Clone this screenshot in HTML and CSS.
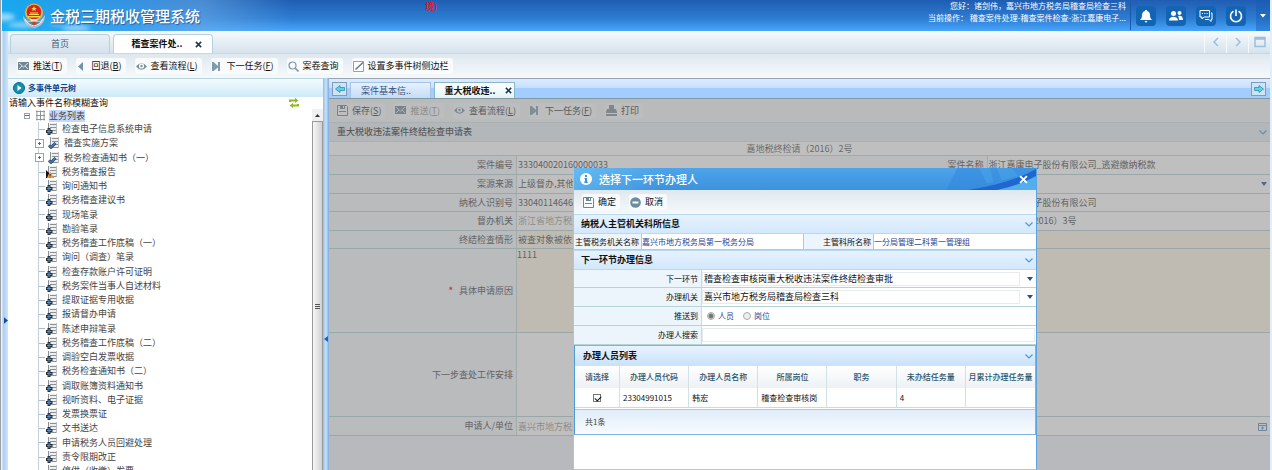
FILE: index.html
```html
<!DOCTYPE html>
<html lang="zh-CN">
<head>
<meta charset="utf-8">
<title>金税三期税收管理系统</title>
<link rel="stylesheet" href="styles.css">
</head>
<body>
<svg class="defs" aria-hidden="true">
  <symbol id="mail" viewBox="0 0 11 11"><path fill="#6f8796" d="M0 1h11v8H0z"/><path d="M1 2l4.500 4L10 2M1 8l3-3M10 8L7 5" fill="none" stroke="#e8eef2" stroke-width=".9"/></symbol>
  <symbol id="back" viewBox="0 0 11 11"><path fill="#6f93a8" d="M6 1v9L1 5.500z"/></symbol>
  <symbol id="eye" viewBox="0 0 11 11"><path fill="#7890a0" d="M0 5.500Q5.500-1 11 5.500Q5.500 12 0 5.500z"/><circle cx="5.500" cy="5" r="2.600" fill="#fff"/><circle cx="5.500" cy="5" r="1.200" fill="#7890a0"/></symbol>
  <symbol id="next" viewBox="0 0 11 11"><path fill="#7f9aab" d="M0 1h1.500L6 5V1h2v9H6V6.500L1.500 10H0z"/></symbol>
  <symbol id="search" viewBox="0 0 11 11"><circle cx="4.500" cy="4.500" r="3.500" fill="none" stroke="#7f97a6" stroke-width="1.200"/><path d="M7 7l3.500 3.500" stroke="#7f97a6" stroke-width="1.600"/></symbol>
  <symbol id="edit" viewBox="0 0 11 11"><path fill="#fff" stroke="#8ea2af" d="M.5.500h10v10H.5z"/><path d="M2.500 8.500L10 1.500" stroke="#647d8d" stroke-width="1.600"/></symbol>
  <symbol id="save" viewBox="0 0 11 11"><path fill="#fff" stroke="#6c8594" d="M.5.500h9l1 1v9H.5z"/><path fill="#6c8594" d="M3 0h5v4H3zM2 6h7v1H2z"/><path fill="#fff" d="M6 1h1v2H6z"/></symbol>
  <symbol id="print" viewBox="0 0 11 11"><path fill="#7f8f99" d="M3 0h5v4H3zM1 4h9l1 3v1H0V7zM0 9h11v2H0z"/></symbol>
  <symbol id="minus" viewBox="0 0 11 11"><circle cx="5.500" cy="5.500" r="5.300" fill="#6c8ba0"/><path fill="#fff" d="M2.500 4.500h6v2h-6z"/></symbol>
  <symbol id="chev" viewBox="0 0 8 5"><path d="M.5.500L4 4L7.500.500" fill="none" stroke="#4a9ad8" stroke-width="1.200"/></symbol>
  <symbol id="caret" viewBox="0 0 6 4"><path fill="#28508f" d="M0 0h6L3 4z"/></symbol>
  <symbol id="cross" viewBox="0 0 8 8"><path d="M1 1l6 6M7 1L1 7" fill="none" stroke="currentColor" stroke-width="1.800"/></symbol>
  <symbol id="arrow" viewBox="0 0 10 8"><path fill="#55d8e4" stroke="#2f8eb0" stroke-width=".8" d="M.5 2.500h4.500V.500L9.500 4L5 7.500v-2H.5z"/></symbol>
  <symbol id="page" viewBox="0 0 12 12"><path fill="#eceef0" d="M2 0h9v11H2z"/><path d="M2.500 0v11M4 1.500h7M4 4.500h7M4 7.500h7M4 10.500h7" stroke="#8c9196" fill="none"/><path d="M10.500 0v11" stroke="#b8bcc0"/></symbol>
  <symbol id="doc" viewBox="0 0 12 12"><use href="#page" width="12" height="12"/><path fill="#25303c" d="M1.500 5h3v2h2v3h-2v2h-3v-2H0V7h1.500z"/><path fill="#5b93c9" d="M2.500 6h1v2h2v1h-2v2h-1V9H1V8h1.500z"/></symbol>
  <symbol id="done" viewBox="0 0 12 12"><use href="#page" width="12" height="12"/><path d="M.8 8.500L3 10.500L7.500 6" fill="none" stroke="#1e3f5e" stroke-width="2.600"/><path d="M1 8.500L3 10.300L7.300 6" fill="none" stroke="#4a83b5" stroke-width="1.200"/></symbol>
  <symbol id="warn" viewBox="0 0 12 12"><use href="#page" width="12" height="12"/><path fill="#111" d="M0 4l8 8H0z"/><path fill="#f29a37" d="M4 5.500L8 12H.8z"/><path fill="#333" d="M3.600 8h1v2h-1zM3.600 10.500h1v1h-1z"/></symbol>
</svg>

<div class="app">
  <aside class="edge"><svg viewBox="0 0 5 8"><path fill="#0c4fa5" d="M0 0l5 4l-5 4z"/></svg></aside>
  <div class="shell">
    <header class="top">
      <svg class="clouds" viewBox="0 0 270 31" aria-hidden="true">
        <defs><filter id="soft"><feGaussianBlur stdDeviation="2"/></filter></defs>
        <g fill="#fff" filter="url(#soft)"><ellipse cx="2" cy="17" rx="11" ry="4" opacity=".55"/><ellipse cx="20" cy="25" rx="14" ry="3" opacity=".45"/><ellipse cx="74" cy="28" rx="14" ry="3" opacity=".5"/><ellipse cx="55" cy="24" rx="7" ry="2" opacity=".3"/></g>
      </svg>
      <svg class="emblem" viewBox="0 0 24 26" aria-hidden="true">
        <path fill="#b9c3cf" d="M1 12c0 7 4 12 11 13c7-1 11-6 11-13c-2 3-4 5-5 6H6c-2-1-4-3-5-6z"/>
        <path fill="#6f7f92" d="M6 19h12l-2 3l-4 2l-4-2z"/>
        <circle cx="12" cy="9.500" r="9" fill="#e8b341"/><circle cx="12" cy="9" r="7.300" fill="#d8231f"/>
        <path fill="#ffd84f" d="M12 3l.8 2h2l-1.600 1.200l.6 2L12 7l-1.800 1.200l.6-2L9.200 5h2zM7 11h10v1H7zM8 9.500h8v1H8zM6 13h12v1.500H6z"/>
        <path fill="#f4e9c5" d="M8 16h8l-1 2H9z"/><circle cx="12" cy="20.500" r="1.800" fill="#cf3a32"/>
        <path d="M3 16c2 4 5 6 9 7c4-1 7-3 9-7" fill="none" stroke="#edf2f6"/>
      </svg>
      <h1>金税三期税收管理系统</h1>
      <span class="env">境)</span>
      <div class="who"><p>您好：诸剑伟，嘉兴市地方税务局稽查局检查三科</p><p>当前操作： 稽查案件处理-稽查案件检查-浙江嘉康电子...</p></div>
      <nav class="tools">
        <button aria-label="通知"><svg viewBox="0 0 14 14"><path fill="#fff" d="M6 1h2v1c2 .6 3 2 3 4.500c0 2 .7 3 2 4.500H1c1.300-1.500 2-2.500 2-4.500C3 4 4 2.600 6 2zM5.500 12h3l-1 1.500h-1z"/></svg></button>
        <button aria-label="用户"><svg viewBox="0 0 14 14"><g fill="#fff"><circle cx="4.500" cy="4.500" r="2.500"/><path d="M0 11.500c0-5 9-5 9 0z"/><circle cx="10.500" cy="4" r="2"/><path d="M9 7c3-1 5 .5 5 4h-4c0-2-.3-3-1-4z"/></g></svg></button>
        <button aria-label="消息"><svg viewBox="0 0 14 14"><g fill="none" stroke="#fff"><path d="M1 1.500h9.500v6.500H5L3 10V8H1z"/><path d="M12 4h1v6.500h-1v2l-2-2H6"/></g><path fill="#fff" d="M3 4h1v1H3zM5.300 4h1v1h-1zM7.600 4h1v1h-1z"/></svg></button>
        <button aria-label="退出"><svg viewBox="0 0 14 14"><path d="M4.500 2.300a5.500 5.500 0 1 0 5 0M7 .5V7" fill="none" stroke="#fff" stroke-width="1.600"/></svg></button>
      </nav>
      <button class="more" aria-label="更多"><svg viewBox="0 0 6 4"><path fill="#fff" d="M0 0h6L3 3.500z"/></svg></button>
    </header>

    <div class="tabs">
      <button class="tab">首页</button>
      <button class="tab on"><span>稽查案件处..</span><svg class="x"><use href="#cross"/></svg></button>
      <div class="pager">
        <button aria-label="向左"><svg viewBox="0 0 12 12"><path d="M8 2L4 6l4 4"/></svg></button>
        <button aria-label="向右"><svg viewBox="0 0 12 12"><path d="M4 2l4 4l-4 4"/></svg></button>
        <button aria-label="窗口"><svg viewBox="0 0 12 12"><path d="M1 1.500h10v9H1zM1 3h10"/></svg></button>
      </div>
    </div>

    <div class="bar">
      <button><svg><use href="#mail"/></svg><span>推送(<u>T</u>)</span></button>
      <button><svg><use href="#back"/></svg><span>回退(<u>B</u>)</span></button>
      <button><svg><use href="#eye"/></svg><span>查看流程(<u>L</u>)</span></button>
      <button><svg><use href="#next"/></svg><span>下一任务(<u>F</u>)</span></button>
      <button><svg><use href="#search"/></svg><span>案卷查询</span></button>
      <button><svg><use href="#edit"/></svg><span>设置多事件树侧边栏</span></button>
    </div>

    <div class="body">
      <section class="side">
        <h2><svg viewBox="0 0 12 12"><circle cx="6" cy="6" r="5.500" fill="#1590ac" stroke="#086a8c"/><path fill="#fff" d="M4.500 3l4 3l-4 3z"/></svg>多事件单元树</h2>
        <div class="find">
          <input type="text" aria-label="事件名称" placeholder="请输入事件名称模糊查询">
          <button aria-label="刷新"><svg viewBox="0 0 10 10"><path fill="#8dbb1a" d="M0 4V1.500h6V0l3.500 2.500L6 5V3.500H2V4zM10 6v2.500H4V10L.5 7.500L4 5v1.500h4V6z"/></svg></button>
        </div>
        <div class="treebox">
          <div class="tree">
            <div class="root"><span class="pm"></span><svg viewBox="0 0 10 12"><path d="M1 .5v11M5 .5v11M9 .5v11M0 1.500h10M0 6h10M0 10.500h10" fill="none" stroke="#858b90"/></svg><span>业务列表</span></div>
            <ul>
              <li><svg><use href="#doc"/></svg>检查电子信息系统申请</li>
              <li class="sub"><svg><use href="#done"/></svg>稽查实施方案</li>
              <li class="sub"><svg><use href="#done"/></svg>税务检查通知书（一）</li>
              <li><svg><use href="#warn"/></svg>税务稽查报告</li>
              <li><svg><use href="#doc"/></svg>询问通知书</li>
              <li><svg><use href="#doc"/></svg>税务稽查建议书</li>
              <li><svg><use href="#doc"/></svg>现场笔录</li>
              <li><svg><use href="#doc"/></svg>勘验笔录</li>
              <li><svg><use href="#doc"/></svg>税务稽查工作底稿（一）</li>
              <li><svg><use href="#doc"/></svg>询问（调查）笔录</li>
              <li><svg><use href="#doc"/></svg>检查存款账户许可证明</li>
              <li><svg><use href="#doc"/></svg>税务案件当事人自述材料</li>
              <li><svg><use href="#doc"/></svg>提取证据专用收据</li>
              <li><svg><use href="#doc"/></svg>报请督办申请</li>
              <li><svg><use href="#doc"/></svg>陈述申辩笔录</li>
              <li><svg><use href="#doc"/></svg>税务稽查工作底稿（二）</li>
              <li><svg><use href="#doc"/></svg>调验空白发票收据</li>
              <li><svg><use href="#doc"/></svg>税务检查通知书（二）</li>
              <li><svg><use href="#doc"/></svg>调取账簿资料通知书</li>
              <li><svg><use href="#doc"/></svg>视听资料、电子证据</li>
              <li><svg><use href="#doc"/></svg>发票换票证</li>
              <li><svg><use href="#doc"/></svg>文书送达</li>
              <li><svg><use href="#doc"/></svg>申请税务人员回避处理</li>
              <li><svg><use href="#doc"/></svg>责令限期改正</li>
              <li><svg><use href="#doc"/></svg>停供（收缴）发票</li>
            </ul>
          </div>
          <div class="scroll"><div class="up"><svg viewBox="0 0 5 3"><path fill="#333" d="M0 3L2.500 0L5 3z"/></svg></div><div class="thumb"><svg viewBox="0 0 5 6"><path d="M0 .5h5M0 2.500h5M0 4.500h5" stroke="#555"/></svg></div></div>
        </div>
      </section>
      <div class="split"><svg viewBox="0 0 4 6"><path fill="#1a5fc4" d="M4 0v6L0 3z"/></svg></div>

      <main class="main">
        <div class="minitabs">
          <button class="go left" aria-label="向左"><svg><use href="#arrow"/></svg></button>
          <button class="mini">案件基本信..</button>
          <button class="mini on"><span>重大税收违..</span><svg class="x"><use href="#cross"/></svg></button>
          <button class="go last" aria-label="向右"><svg><use href="#arrow"/></svg></button>
        </div>
        <div class="work">
          <div class="bar">
            <button><svg><use href="#save"/></svg><span>保存(<u>S</u>)</span></button>
            <button class="off" disabled><svg><use href="#mail"/></svg><span>推送(<u>T</u>)</span></button>
            <button><svg><use href="#eye"/></svg><span>查看流程(<u>L</u>)</span></button>
            <button><svg><use href="#next"/></svg><span>下一任务(<u>F</u>)</span></button>
            <button><svg><use href="#print"/></svg><span>打印</span></button>
          </div>
          <h3 class="formhead">重大税收违法案件终结检查申请表<svg class="chev"><use href="#chev"/></svg></h3>
          <p class="docno">嘉地税终检请（2016）2号</p>
          <form class="grid">
            <label for="f1">案件编号</label><input id="f1" value="333040020160000033">
            <label for="f2">案件名称</label><input id="f2" value="浙江嘉康电子股份有限公司_逃避缴纳税款">
            <label for="f3">案源来源</label><div class="pick wide"><select id="f3"><option>上级督办,其他</option></select><svg><use href="#caret"/></svg></div>
            <label for="f4">纳税人识别号</label><input id="f4" value="330401146462">
            <label for="f5">纳税人名称</label><input id="f5" value="浙江嘉康电子股份有限公司">
            <label for="f6">督办机关</label><input id="f6" class="dim" value="浙江省地方税务局">
            <label for="f7">督办文号</label><input id="f7" value="嘉地税稽（2016）3号">
            <label for="f8">终结检查情形</label><input id="f8" class="wide warm" value="被查对象被依法">
            <label for="f9"><b>*</b>具体申请原因</label><textarea id="f9" class="wide warm">1111</textarea>
            <label for="f10">下一步查处工作安排</label><textarea id="f10" class="wide"></textarea>
            <label for="f11">申请人/单位</label><div class="pick wide"><input id="f11" class="dim" value="嘉兴市地方税务局"><svg class="cal" viewBox="0 0 9 9"><path fill="#fff" stroke="#5d8fc0" d="M.5 1.500h8v7h-8zM.5 3.500h8"/><path d="M4.500 4.500v3M3 6h3" stroke="#5d8fc0"/></svg></div>
          </form>
        </div>
        <div class="mask"></div>

        <div class="dialog" role="dialog" aria-labelledby="dt">
          <div class="dhead">
            <svg class="wave" viewBox="0 0 110 23" preserveAspectRatio="none" aria-hidden="true"><path fill="#2f86dc" d="M14 0h96v23H0z" opacity=".5"/><path fill="#52aeec" d="M62 23Q90 18 110 9v14z"/><path fill="#1f66d0" d="M26 23Q80 16 110 1v7Q90 18 62 23z"/><path fill="#4aa6ea" d="M40 0h14l4 15l-8 1zM62 0h18l8 8l-20 5z" opacity=".5"/></svg>
            <svg class="info" viewBox="0 0 12 12"><circle cx="6" cy="6" r="6" fill="#fff"/><path fill="#3b95dd" d="M5 2h2v2H5zM4.500 5H7v3.500h.7V10H4.300V8.500H5V6h-.5z"/></svg>
            <h2 id="dt">选择下一环节办理人</h2>
            <button aria-label="关闭"><svg><use href="#cross"/></svg></button>
          </div>
          <div class="bar">
            <button><svg><use href="#save"/></svg><span>确定</span></button>
            <button><svg><use href="#minus"/></svg><span>取消</span></button>
          </div>
          <h3 class="sec">纳税人主管机关科所信息<svg class="chev"><use href="#chev"/></svg></h3>
          <dl class="facts"><dt>主管税务机关名称</dt><dd>嘉兴市地方税务局第一税务分局</dd><dt>主管科所名称</dt><dd>一分局管理二科第一管理组</dd></dl>
          <h3 class="sec">下一环节办理信息<svg class="chev"><use href="#chev"/></svg></h3>
          <form class="dform">
            <label for="d1">下一环节</label><div class="pick"><select id="d1"><option>稽查检查审核岗重大税收违法案件终结检查审批</option></select><svg><use href="#caret"/></svg></div>
            <label for="d2">办理机关</label><div class="pick"><select id="d2"><option>嘉兴市地方税务局稽查局检查三科</option></select><svg><use href="#caret"/></svg></div>
            <span class="lab">推送到</span><div class="radios"><label><input type="radio" name="to" checked>人员</label><label><input type="radio" name="to">岗位</label></div>
            <label for="d3">办理人搜索</label><div class="pick"><input type="text" id="d3"></div>
          </form>
          <div class="list">
            <h3>办理人员列表<svg class="chev"><use href="#chev"/></svg></h3>
            <table>
              <thead><tr><th class="c1">请选择</th><th>办理人员代码</th><th>办理人员名称</th><th>所属岗位</th><th>职务</th><th>未办结任务量</th><th>月累计办理任务量</th></tr></thead>
              <tbody><tr><td class="c1"><input type="checkbox" aria-label="选择韩宏" checked></td><td>23304991015</td><td>韩宏</td><td>稽查检查审核岗</td><td></td><td>4</td><td></td></tr></tbody>
            </table>
            <p>共1条</p>
          </div>
        </div>
      </main>
    </div>
  </div>
</div>
</body>
</html>
```

FILE: styles.css
```css
* { box-sizing: border-box; margin: 0; padding: 0; }
body {
  font: 9px/12px "Noto Sans CJK SC", "Liberation Sans", sans-serif;
  color: #111;
  background: #fff;
  overflow: hidden;
}
button, input, select, textarea { font: inherit; color: inherit; border: 0; background: none; border-radius: 0; outline: 0; }
button { display: flex; align-items: center; justify-content: center; white-space: nowrap; }
select, input { appearance: none; min-width: 0; }
svg { flex: none; display: block; }
h1, h2, h3 { white-space: nowrap; }
.defs { position: absolute; width: 0; height: 0; }

.app { display: flex; height: 100vh; border-right: 2px solid #e3eefb; }
.edge {
  width: 8px; flex: none; padding-left: 3px;
  display: flex; align-items: center;
  border-left: 1px solid #9aa0a6;
  background: linear-gradient(90deg, #eef3f8 1px, #a9cdf2 2px, #cfe5fa);
}
.edge svg { width: 4px; height: 7px; margin-top: 171px; }
.shell { flex: 1; min-width: 0; display: flex; flex-direction: column; }

/* header */
.top {
  position: relative; flex: none; height: 31px; margin-left: -6px;
  display: flex; align-items: center; padding-left: 20px;
  color: #fff;
  background:
    linear-gradient(90deg, rgba(20, 176, 244, .9) 0, rgba(60, 160, 236, .8) 130px, rgba(110, 175, 235, .55) 200px, rgba(60, 140, 230, 0) 290px),
    linear-gradient(#1f5db2, #2d7dd2 60%, #48a5fb);
}
.clouds { position: absolute; left: 0; top: 0; width: 270px; height: 31px; }
.emblem { position: relative; width: 24px; height: 26px; }
.top h1 { position: relative; margin-left: 4px; font-size: 15px; line-height: 22px; font-weight: 500; text-shadow: 1px 1px 1px #2a5f9c; }
.env { align-self: flex-start; margin-left: 225px; padding-top: 1px; color: #e3122c; font-weight: 500; }
.who { margin-left: auto; align-self: flex-start; font-size: 8px; text-align: right; white-space: nowrap; }
.tools { display: flex; gap: 10px; margin-left: 4px; padding-left: 5px; border-left: 1px solid #1a5aa8; height: 28px; align-items: center; }
.tools button { width: 20px; height: 20px; border-radius: 4px; background: #1464b4; }
.tools svg { width: 14px; height: 14px; }
.more { width: 14px; height: 31px; margin-left: 10px; background: rgba(20, 90, 180, .4); }
.more svg { width: 6px; height: 4px; }

/* page tabs */
.tabs {
  flex: none; height: 23px; display: flex; align-items: flex-end; gap: 3px; padding-left: 2px;
  background: linear-gradient(#f7fbfd, #d6e2ec); border-bottom: 1px solid #c3d8e8;
}
.tab { width: 100px; height: 19px; border: 1px solid #b8cfe2; border-bottom: 0; border-radius: 4px 4px 0 0; color: #3e5a76; background: linear-gradient(#e8f0f6, #d4e1ec); }
.tab.on { padding-left: 8px; gap: 13px; font-weight: 700; color: #111; background: #fff; }
.x { width: 7px; height: 7px; color: #1f3558; }
.pager { margin-left: auto; align-self: stretch; display: flex; }
.pager button { width: 22px; border-left: 1px solid #f7fafc; }
.pager svg { width: 12px; height: 12px; fill: none; stroke: #9dbfdd; stroke-width: 1.500; }

/* toolbars */
.bar { flex: none; height: 24px; display: flex; align-items: center; gap: 9px; padding: 0 9px; background: linear-gradient(#dfe8ef, #f6f9fb); }
.bar button { height: 16px; gap: 4px; padding: 0 4px 0 1px; border-radius: 3px; background: #f8fafc; }
.bar svg { width: 11px; height: 11px; }
.bar .off { color: #999; }

/* columns */
.body { flex: 1; min-height: 0; display: flex; }
.side { width: 315px; flex: none; display: flex; flex-direction: column; background: #fff; }
.side h2 { flex: none; height: 19px; display: flex; align-items: center; gap: 3px; padding-left: 5px; font-size: 8px; color: #15428b; border-top: 1px solid #b5d6da; background: linear-gradient(#f4fbfe, #cdeaf8); }
.side h2 svg { width: 12px; height: 12px; }
.find { flex: none; height: 12px; display: flex; align-items: center; padding-right: 24px; }
.find input { flex: 1; height: 12px; padding-left: 1px; }
.find input::placeholder { color: #111; }
.find svg { width: 10px; height: 10px; }
.treebox { flex: 1; min-height: 0; display: flex; }
.tree { flex: 1; overflow: hidden; color: #444; white-space: nowrap; }
.root { height: 13px; display: flex; align-items: center; gap: 6px; padding-left: 16px; }
.root svg { width: 9px; height: 11px; }
.root > span:last-child { margin-left: -2px; background: #c2dafe; }
.pm, .sub::before { content: ""; width: 6px; height: 6px; border: 1px solid #96a3b3; background: linear-gradient(#4a6a9a, #4a6a9a) center / 4px 1px no-repeat #fff; }
.tree ul { list-style: none; margin-left: 30px; border-left: 1px solid #c3cfdd; }
.tree li { height: 14px; display: flex; align-items: center; gap: 4px; }
.tree li:nth-child(4n+3) { height: 15px; }
.tree li::before { content: ""; width: 6px; height: 1px; margin-right: -3px; background: #a9bccf; }
.tree li.sub::before { width: 7px; height: 7px; margin-left: -4px; margin-right: -0px; background: linear-gradient(#4a6a9a, #4a6a9a) center / 3px 1px no-repeat, linear-gradient(#4a6a9a, #4a6a9a) center / 1px 3px no-repeat #fff; }
.tree li.sub svg { margin-left: -1px; }
.tree li.sub svg { margin-left: 0; }
.tree li.sub { gap: 4px; }
.tree li.sub::before { margin-right: -0px; }
.tree li svg { width: 12px; height: 12px; }
.scroll { width: 11px; flex: none; display: flex; flex-direction: column; background: #eee; }
.up { height: 12px; display: flex; align-items: center; justify-content: center; background: #f0f0f0; }
.up svg { width: 5px; height: 3px; }
.thumb { flex: 1; display: flex; align-items: center; justify-content: center; border: 1px solid #999; border-bottom: 0; background: linear-gradient(90deg, #f8f8f8, #d0d0d2); }
.thumb svg { width: 5px; height: 6px; margin-top: 22px; }
.split { width: 6px; flex: none; display: flex; align-items: center; justify-content: center; background: linear-gradient(90deg, #8fc0ea, #c9e2f8 50%, #7fa9d8); }
.split svg { width: 4px; height: 6px; margin-top: 130px; }

/* main area */
.main { position: relative; flex: 1; min-width: 0; display: flex; flex-direction: column; }
.minitabs { flex: none; height: 21px; display: flex; align-items: flex-end; gap: 3px; padding: 0 4px 0 3px; border-top: 1px solid #98a4b0; border-bottom: 1px solid #7f99a5; background: linear-gradient(#dcebff 0, #c6dfff 45%, #a4cdff 46%, #a4cdff); }
.go { width: 15px; height: 14px; align-self: center; border: 1px solid #7f9dbb; background: #cfe2f6; }
.go svg { width: 10px; height: 8px; }
.go.left svg { transform: rotate(180deg); }
.go.last { margin-left: auto; }
.mini { width: 81px; height: 16px; padding-right: 9px; color: #35557c; border: 1px solid #a5c4e6; border-bottom: 0; background: linear-gradient(#e6f1ff, #c5dcf6); }
.mini.on { padding-right: 0; padding-left: 8px; gap: 10px; font-weight: 700; color: #111; border-color: #8bb8c8; background: linear-gradient(#fff, #e2f4f5); }
.work { flex: 1; min-height: 0; overflow: hidden; background: #f0f2f8; }
.work .bar { height: 23px; padding: 0 7px; color: #333; background: #f3f4f5; }
.mask { position: absolute; inset: 21px 0 0 0; background: rgba(128, 128, 128, .5); }
.formhead { height: 20px; display: flex; align-items: center; justify-content: space-between; padding: 0 3px 0 8px; font-size: 9px; font-weight: 500; color: #333; background: #e6eef5; border-top: 1px solid #d5e0ea; border-bottom: 1px solid #d5e0ea; }
.chev { width: 8px; height: 5px; }
.docno { height: 13px; line-height: 13px; text-align: center; color: #555; background: #fff; }
.grid { display: grid; grid-template-columns: 188px 1fr 188px 1fr; grid-template-rows: 19px 19px 18px 19px 18px 84px 84px 19px; color: #444; border-top: 1px solid #c3d7da; }
.grid > * { border-bottom: 1px solid #b4cfd0; }
.grid > label { display: flex; align-items: center; justify-content: flex-end; padding-right: 3px; background: #f3f6fb; border-right: 1px solid #c3d7da; }
.grid > label b { margin-right: 6px; color: #e00; }
.grid > input { padding-left: 1px; background: #fff; }
.grid > input.warm { background: #fff6e4; }
.grid input.dim { color: #999; }
.grid .wide { grid-column: 2 / -1; }
.grid > textarea { resize: none; background: #fff; }
.grid > textarea.warm { background: #fff6e4; }
.pick { display: flex; align-items: center; min-width: 0; padding-right: 3px; background: #fff; }
.pick select, .pick input { flex: 1; height: 14px; margin-right: 7px; padding-left: 1px; border: 1px solid #e3ecf0; }
.pick svg { width: 6px; height: 4px; }
.pick .cal { width: 9px; height: 9px; }
#f3, #f11 { border: 0; }

/* dialog */
.dialog {
  position: absolute; left: 244px; top: 90px; bottom: 0; width: 464px;
  display: flex; flex-direction: column;
  background: #fff; border: 1px solid #5ba3dc; border-left-color: #9cc8ec; border-top: 0; border-bottom-color: #c4c4c4;
}
.dhead { position: relative; flex: none; height: 22px; display: flex; align-items: center; gap: 7px; padding: 0 8px 0 6px; color: #fff; background: linear-gradient(100deg, rgba(140, 220, 255, .4), rgba(140, 220, 255, 0) 90px), linear-gradient(#4da4ea, #3d92dd); }
.wave { position: absolute; right: 0; top: 0; width: 90px; height: 22px; }
.info { width: 12px; height: 12px; }
.dhead h2 { font-size: 11px; line-height: 16px; font-weight: 500; }
.dhead button { position: relative; margin-left: auto; }
.dhead button svg { width: 9px; height: 9px; }
.dialog .bar { padding: 0 8px; }
.sec { flex: none; height: 20px; display: flex; align-items: center; justify-content: space-between; padding: 0 3px 0 7px; font-size: 9px; border-top: 1px solid #b9d8f2; border-bottom: 1px solid #b9d8f2; background: linear-gradient(#e6f2ff, #d3e8fd); }
.facts { flex: none; height: 16px; display: grid; grid-template-columns: 68px 1fr 70px 1fr; font-size: 8px; line-height: 15px; border-bottom: 1px solid #a8d0cf; white-space: nowrap; }
.facts dt { padding-right: 2px; text-align: right; background: #ecf4fc; border-right: 1px solid #a8d0cf; }
.facts dd { color: #1f448f; border-right: 1px solid #a8d0cf; }
.facts dd:last-child { border: 0; }
.dform { flex: none; display: grid; grid-template-columns: 128px 1fr; grid-template-rows: 18px 19px 19px 19px; }
.dform > * { border-bottom: 1px solid #b5d4d6; }
.dform > label, .lab { display: flex; align-items: center; justify-content: flex-end; padding-right: 3px; font-size: 8px; background: #ecf4fc; border-right: 1px solid #c5dde8; }
.dform .pick input { margin-right: -2px; }
.radios { display: flex; align-items: center; gap: 9px; padding-left: 5px; font-size: 8px; color: #1f448f; }
.radios label { display: flex; align-items: center; gap: 3px; }
.radios input { width: 8px; height: 8px; border: 1px solid #aaa; border-radius: 50%; background: #eee; }
.radios input:checked { background: radial-gradient(#777 2px, #eee 3px); }
.list { flex: none; border: 1px solid #7db4e2; border-left-color: #4d9bd8; }
.list h3 { height: 20px; display: flex; align-items: center; justify-content: space-between; padding: 0 2px 0 8px; font-size: 9px; background: linear-gradient(#e8f3ff, #c9e1fb); }
table { width: 100%; table-layout: fixed; border-collapse: separate; border-spacing: 0; font-size: 8px; white-space: nowrap; }
th { height: 22px; color: #2b566e; font-weight: 500; background: linear-gradient(#fff, #edf1f5); border-right: 1px solid #d0e2e3; }
td { height: 20px; padding-left: 3px; border-right: 1px solid #d0e2e3; border-bottom: 1px solid #c9dbe0; }
th:last-child, td:last-child { border-right: 0; }
.c1 { width: 45px; padding: 0; }
td input { display: block; width: 8px; height: 8px; margin: 0 auto; border: 1px solid #777; background: #fff; }
td input:checked::before { content: ""; display: block; width: 5px; height: 3px; margin: 1px 0 0 1px; border: solid #111; border-width: 0 0 1px 1px; transform: rotate(-45deg); }
.list p { height: 25px; margin-top: 1px; padding-left: 10px; line-height: 24px; font-size: 8px; color: #444; border-top: 1px solid #a8cbe8; background: linear-gradient(#e0edfa, #f8fbfe); }
```
